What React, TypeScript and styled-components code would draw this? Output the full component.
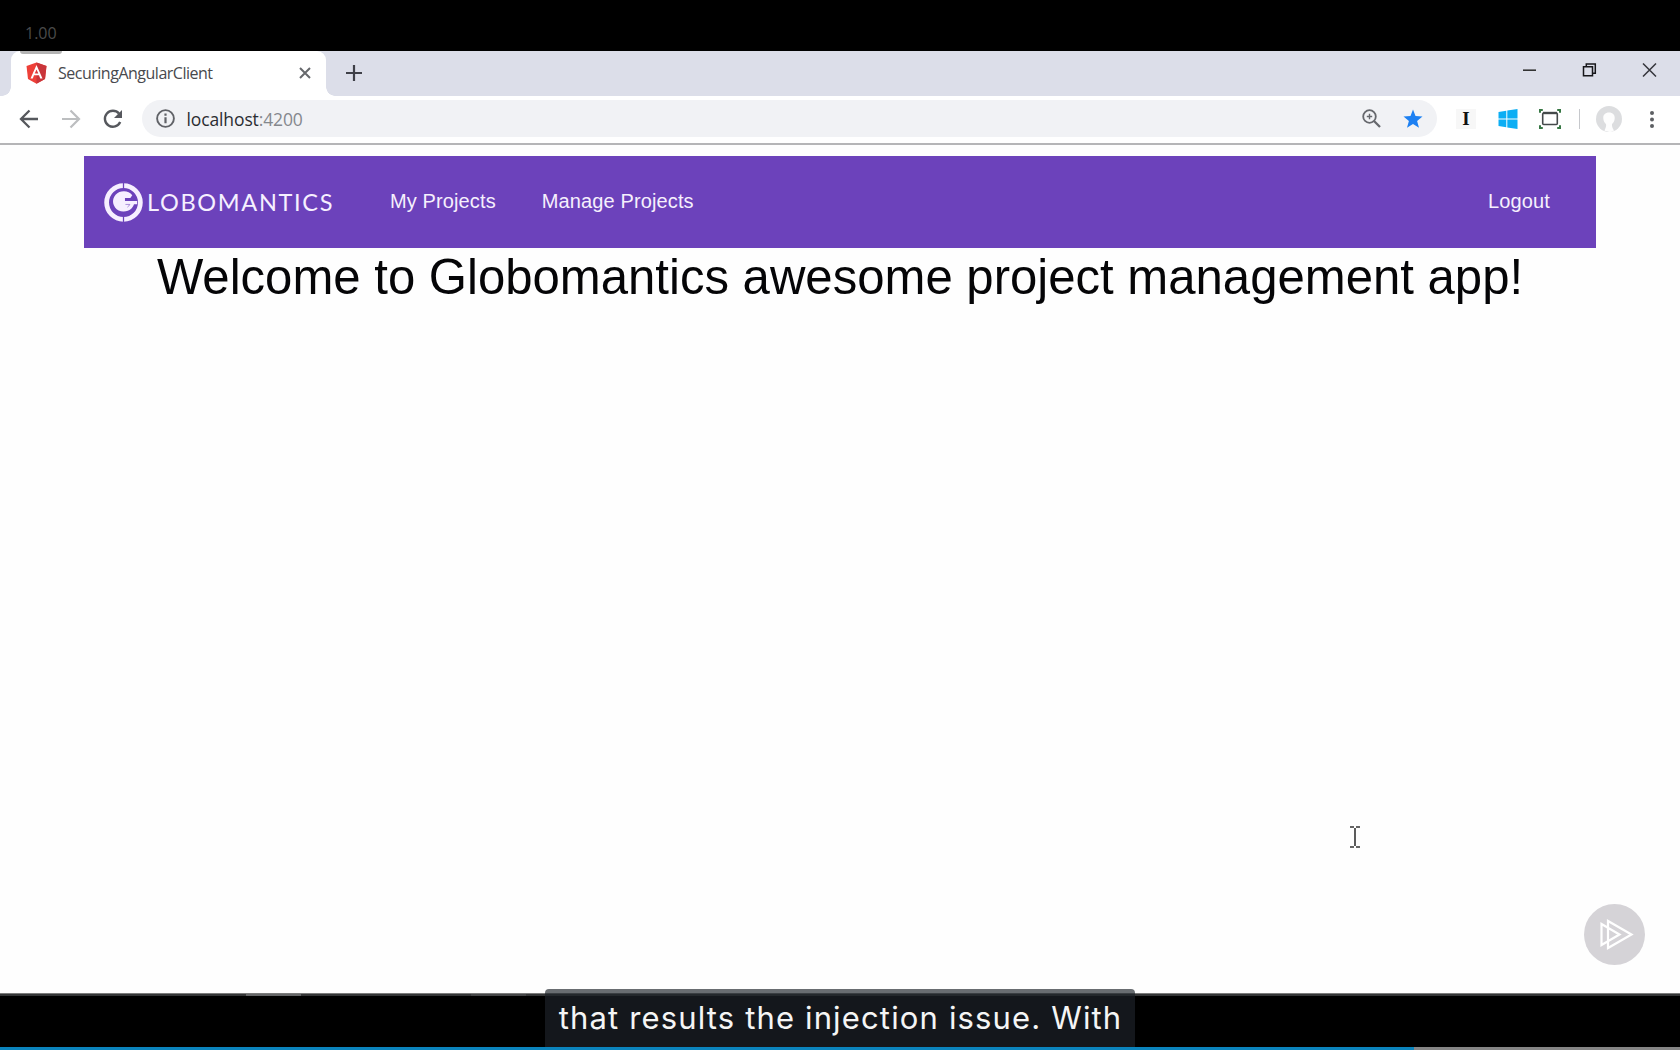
import React from "react";
import styled, { createGlobalStyle } from "styled-components";

const Global = createGlobalStyle`
  * { box-sizing: border-box; }
  body { margin: 0; background: #000; overflow: hidden; }
`;

const Player = styled.div`
  position: relative;
  width: 1680px;
  height: 1050px;
  display: flex;
  flex-direction: column;
  background: #000;
  overflow: hidden;
`;

const SpeedBar = styled.div`
  height: 51px;
  padding: 22px 0 0 25px;
  color: #4b4b4b;
  font: 16px/22px "Open Sans", sans-serif;
`;

const TabStrip = styled.div`
  position: relative;
  height: 45px;
  display: flex;
  background: #dcdee9;
`;

const SpeedPill = styled.div`
  position: absolute;
  left: 20px;
  top: 0;
  width: 42px;
  height: 3px;
  border-radius: 0 0 5px 5px;
  background: #b4b4b4;
`;

const Tab = styled.div`
  position: relative;
  width: 315px;
  margin-left: 11px;
  padding: 0 14px 2px 15px;
  display: flex;
  align-items: center;
  background: #fff;
  border-radius: 9px 9px 0 0;
  &::before, &::after {
    content: "";
    position: absolute;
    bottom: 0;
    width: 9px;
    height: 9px;
  }
  &::before { left: -9px; background: radial-gradient(circle at 0 0, transparent 8.5px, #fff 9px); }
  &::after { right: -9px; background: radial-gradient(circle at 100% 0, transparent 8.5px, #fff 9px); }
`;

const TabTitle = styled.span`
  flex: 1;
  margin-left: 11px;
  color: #48494d;
  font: 16px/22px "Open Sans", sans-serif;
  letter-spacing: -0.49px;
`;

const NewTab = styled.div`
  margin-left: 20px;
  padding-bottom: 1px;
  display: flex;
  align-items: center;
`;

const WindowButtons = styled.div`
  margin-left: auto;
  padding: 12px 23px 0 0;
  display: flex;
  gap: 45px;
  svg { display: block; }
`;

const Toolbar = styled.div`
  height: 49px;
  padding: 4px 20px 0 18px;
  display: flex;
  align-items: flex-start;
  background: #fff;
  border-bottom: 2px solid #b5b5b7;
`;

const ToolIcon = styled.span<{ $w: number; $ml?: number }>`
  width: ${(p) => p.$w}px;
  height: 38px;
  margin-left: ${(p) => p.$ml ?? 0}px;
  display: flex;
  align-items: center;
  justify-content: center;
  flex: none;
`;

const Omnibox = styled.div`
  width: 1295px;
  height: 37px;
  margin-left: 18px;
  padding: 0 14px 0 13px;
  display: flex;
  align-items: center;
  border-radius: 19px;
  background: #f1f2f5;
`;

const Url = styled.span`
  flex: 1;
  margin-left: 11.5px;
  color: #2b2d31;
  font: 17.5px/24px "Open Sans", sans-serif;
  letter-spacing: -0.12px;
`;

const Port = styled.span`
  color: #85888d;
`;

const Divider = styled.span`
  width: 1px;
  height: 20px;
  margin: 9px 0 0 18px;
  background: #c6c8cc;
`;

const InstapaperTile = styled.span`
  width: 20px;
  height: 20px;
  display: flex;
  align-items: center;
  justify-content: center;
  background: #f7f7f7;
  color: #111;
  font: bold 19px/20px "Liberation Serif", serif;
`;

const Page = styled.main`
  height: 848px;
  padding: 11px 84px 0;
  background: #fefefe;
`;

const NavBar = styled.nav`
  height: 92px;
  padding: 0 46px 2px 20px;
  display: flex;
  align-items: center;
  background: #6c42bb;
`;

const Brand = styled.div`
  width: 286px;
  padding-top: 2px;
  display: flex;
  align-items: center;
`;

const BrandName = styled.span`
  margin-left: 4px;
  color: #f6f0ff;
  font: 23.5px/28px Lato, sans-serif;
  letter-spacing: 1.68px;
`;

const NavLink = styled.a<{ $gap?: number }>`
  margin-right: ${(p) => p.$gap ?? 0}px;
  color: #f6f0fd;
  font: 20px/24px "Liberation Sans", Arial, sans-serif;
  letter-spacing: 0.12px;
`;

const Spacer = styled.span`
  flex: 1;
`;

const Heading = styled.h1`
  margin: 0;
  text-align: center;
  white-space: nowrap;
  color: #050507;
  font: 49.1px/58px "Liberation Sans", Arial, sans-serif;
`;

const TaskEdge = styled.div`
  height: 3px;
  display: flex;
  border-top: 1px solid #7b7b7b;
  background: #343536;
`;

const EdgeSegment = styled.span<{ $ml: number; $w: number; $c: string }>`
  width: ${(p) => p.$w}px;
  margin-left: ${(p) => p.$ml}px;
  background: ${(p) => p.$c};
`;

const Letterbox = styled.div`
  flex: 1;
`;

const Progress = styled.div`
  height: 3px;
  background: #858585;
`;

const Played = styled.div`
  width: 1414px;
  height: 3px;
  background: #0b84bd;
`;

const Caption = styled.div`
  position: absolute;
  left: 545px;
  top: 989px;
  width: 590px;
  height: 58px;
  padding-left: 1px;
  display: flex;
  justify-content: center;
  border-radius: 4px 4px 0 0;
  background: linear-gradient(#696d71 0 4px, #3a3e42 4px 5px, #24282c 5px 7px, #14171c 7px);
  color: #f5f5f5;
  white-space: nowrap;
  font: 31px/58px Inter, sans-serif;
  letter-spacing: 1.15px;
`;

const Watermark = styled.svg`
  position: absolute;
  left: 1584px;
  top: 904px;
`;

const TextCursor = styled.svg`
  position: absolute;
  left: 1350px;
  top: 826px;
`;

const Angular = () => (
  <svg width="21" height="22" viewBox="0 0 21 22">
    <path d="M10.5.5 20.5 4 19 17l-8.500 4.700L2 17 .500 4z" fill="#ee4038" />
    <path d="M10.500.5 20.500 4 19 17l-8.500 4.700z" fill="#c9353a" />
    <path d="m10.500 3-6 13.400h2.300L8 13.300h5l1.200 3.100h2.300zm0 4.400 1.800 4.100H8.700z" fill="#fff" />
  </svg>
);

const GlobeMark = () => (
  <svg width="39" height="39" viewBox="0 0 40 40">
    <circle cx="20" cy="20" r="17.300" fill="none" stroke="#f6efff" strokeWidth="4.900" />
    <path d="M20 0v6M20 34v6" stroke="#6c42bb" strokeWidth="1.300" />
    <path d="M29 12.500A11 10.500 0 1 0 30.800 21.800H34V18.500H21.500V15.300H27z" fill="#f6efff" />
    <path d="M22 22H26.500A6.500 6.500 0 0 1 24 24.800" stroke="#6c42bb" strokeOpacity=".55" strokeWidth="1" fill="none" />
  </svg>
);

export default function App() {
  return (
    <Player>
      <Global />
      <SpeedBar>1.00</SpeedBar>
      <TabStrip>
        <Tab>
          <Angular />
          <TabTitle>SecuringAngularClient</TabTitle>
          <svg width="14" height="14" viewBox="0 0 14 14">
            <path d="m2 2 10 10M12 2 2 12" stroke="#66686c" strokeWidth="2" />
          </svg>
        </Tab>
        <SpeedPill />
        <NewTab>
          <svg width="16" height="16" viewBox="0 0 16 16">
            <path d="M8 0v16M0 8h16" stroke="#3f4048" strokeWidth="2.200" />
          </svg>
        </NewTab>
        <WindowButtons>
          <svg width="15" height="14" viewBox="0 0 15 14">
            <path d="M1 7.200h13" stroke="#333" strokeWidth="1.600" />
          </svg>
          <svg width="15" height="14" viewBox="0 0 15 14" fill="none" stroke="#17171b" strokeWidth="1.500">
            <path d="M1.500 3.800h9v9h-9zM4.300 3.500V1h9v9.200h-2.500" />
          </svg>
          <svg width="15" height="14" viewBox="0 0 15 14">
            <path d="m1 .5 13 13M14 .5 1 13.500" stroke="#36373d" strokeWidth="1.500" />
          </svg>
        </WindowButtons>
      </TabStrip>
      <Toolbar>
        <ToolIcon $w={22}>
          <svg width="20" height="20" viewBox="0 0 20 20" fill="none" stroke="#56585d" strokeWidth="2.300">
            <path d="M19 10H2.500M10.500 1.500 2 10l8.500 8.500" />
          </svg>
        </ToolIcon>
        <ToolIcon $w={22} $ml={20}>
          <svg width="20" height="20" viewBox="0 0 20 20" fill="none" stroke="#bcbec0" strokeWidth="2.200">
            <path d="M1 10h16.500M9.500 1.500 18 10l-8.500 8.500" />
          </svg>
        </ToolIcon>
        <ToolIcon $w={22} $ml={20}>
          <svg width="20" height="20" viewBox="0 0 20 20">
            <path d="M17.200 13A8 8 0 1 1 16 4.500" fill="none" stroke="#56585d" strokeWidth="2.400" />
            <path d="M19 1v8h-8z" fill="#56585d" />
          </svg>
        </ToolIcon>
        <Omnibox>
          <ToolIcon $w={20}>
            <svg width="19" height="19" viewBox="0 0 19 19">
              <circle cx="9.500" cy="9.500" r="8.400" fill="none" stroke="#606267" strokeWidth="1.900" />
              <path d="M9.500 8.300v6M9.500 4.500v2.200" stroke="#606267" strokeWidth="2.200" />
            </svg>
          </ToolIcon>
          <Url>localhost<Port>:4200</Port></Url>
          <ToolIcon $w={20}>
            <svg width="19" height="19" viewBox="0 0 19 19" fill="none" stroke="#66686d">
              <circle cx="7.500" cy="7.500" r="6.300" strokeWidth="1.800" />
              <path d="m12 12 6 6" strokeWidth="2.300" />
              <path d="M7.500 4.800v5.400M4.800 7.500h5.400" strokeWidth="1.400" />
            </svg>
          </ToolIcon>
          <ToolIcon $w={20} $ml={22}>
            <svg width="20" height="20" viewBox="0 0 20 20">
              <path d="m10 .5 2.500 6.600 7 .4-5.400 4.400 1.900 6.900-6-3.900-6 3.900 1.900-6.900L.5 7.500l7-.4z" fill="#1d80f2" />
            </svg>
          </ToolIcon>
        </Omnibox>
        <ToolIcon $w={20} $ml={19}>
          <InstapaperTile>I</InstapaperTile>
        </ToolIcon>
        <ToolIcon $w={20} $ml={22}>
          <svg width="20" height="20" viewBox="0 0 20 20" fill="#0caef4">
            <path d="M.5 3 8.300 1.800v7.700H.5zM9.300 1.600 19.500 0v9.500H9.300zM.5 10.500h7.800v7.700L.5 17zM9.300 10.500h10.200V20L9.300 18.400z" />
          </svg>
        </ToolIcon>
        <ToolIcon $w={22} $ml={21}>
          <svg width="22" height="20" viewBox="0 0 22 20" fill="none">
            <rect x="3.700" y="4" width="14.600" height="11.500" rx="1" stroke="#44494a" strokeWidth="1.600" />
            <path d="M4 4h14" stroke="#44494a" strokeWidth="2.400" />
            <path d="M1 3.800V1h2.800M18.200 1H21v2.800M21 16.200V19h-2.800M3.800 19H1v-2.800" stroke="#377744" strokeWidth="2" />
          </svg>
        </ToolIcon>
        <Divider />
        <ToolIcon $w={26} $ml={16}>
          <svg width="26" height="26" viewBox="0 0 26 26">
            <circle cx="13" cy="13" r="13" fill="#dcdddf" />
            <path d="M13 6.500c-3.800 0-6 2.500-5.700 6 .2 2.500 1.200 4.300 2.700 5.500.5 2.600-.5 3.800-1.500 6.600 2 1.200 3 1.400 5 1.400s2.500-.4 4.500-1.500c-1.300-1.900-2.200-3.700-2-6.500 1.500-1.200 2.500-3 2.700-5.500.3-3.500-1.900-6-5.700-6z" fill="#fdfdfd" />
          </svg>
        </ToolIcon>
        <ToolIcon $w={6} $ml={27}>
          <svg width="6" height="19" viewBox="0 0 6 19" fill="#5d5f63">
            <circle cx="3" cy="3" r="2" />
            <circle cx="3" cy="9.500" r="2" />
            <circle cx="3" cy="16" r="2" />
          </svg>
        </ToolIcon>
      </Toolbar>
      <Page>
        <NavBar>
          <Brand>
            <GlobeMark />
            <BrandName>LOBOMANTICS</BrandName>
          </Brand>
          <NavLink $gap={46}>My Projects</NavLink>
          <NavLink>Manage Projects</NavLink>
          <Spacer />
          <NavLink>Logout</NavLink>
        </NavBar>
        <Heading>Welcome to Globomantics awesome project management app!</Heading>
      </Page>
      <TaskEdge>
        <EdgeSegment $ml={246} $w={55} $c="#656667" />
        <EdgeSegment $ml={170} $w={55} $c="#454647" />
      </TaskEdge>
      <Letterbox />
      <Progress><Played /></Progress>
      <TextCursor width="10" height="22" viewBox="0 0 10 22" fill="none" stroke="#333">
        <path d="M0 1h4M6 1h4M0 21h4M6 21h4" strokeWidth="1.700" />
        <path d="M5 2v18" strokeWidth="1.600" />
      </TextCursor>
      <Watermark width="61" height="61" viewBox="0 0 61 61">
        <circle cx="30.500" cy="30.500" r="30.500" fill="#d5d3d7" />
        <path d="M17.500 20v21l18-10.500zM24 17v27l23.500-13.500z" fill="none" stroke="#fff" strokeWidth="2.200" />
      </Watermark>
      <Caption>that results the injection issue. With</Caption>
    </Player>
  );
}
